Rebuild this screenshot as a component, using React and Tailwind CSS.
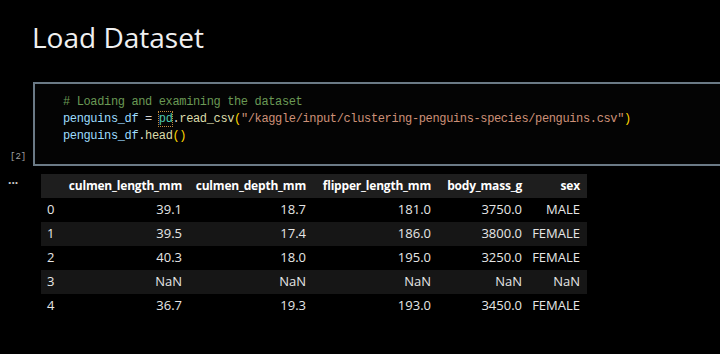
const cols = [
  { name: "culmen_length_mm", w: "w-[127px]" },
  { name: "culmen_depth_mm", w: "w-[124px]" },
  { name: "flipper_length_mm", w: "w-[125px]" },
  { name: "body_mass_g", w: "w-[91px]" },
  { name: "sex", w: "w-[58px]" },
];

const rows = [
  ["39.1", "18.7", "181.0", "3750.0", "MALE"],
  ["39.5", "17.4", "186.0", "3800.0", "FEMALE"],
  ["40.3", "18.0", "195.0", "3250.0", "FEMALE"],
  ["NaN", "NaN", "NaN", "NaN", "NaN"],
  ["36.7", "19.3", "193.0", "3450.0", "FEMALE"],
];

export default function App() {
  return (
    <div className="w-[720px] h-[354px] bg-black overflow-hidden text-[#e6e6e6]" style={{ fontFamily: '"Open Sans", "Noto Sans", sans-serif' }}>
      <h1 className="pl-[32px] pt-[17px] text-[28px] leading-[40px] text-[#f0f0f0]">Load Dataset</h1>

      {/* code cell */}
      <div className="flex mt-[25px]">
        <div className="w-[33px] flex flex-col justify-end pb-[2px]">
          <span className="pl-[10px] text-[9px] text-[#a0a0a0] font-mono">[2]</span>
        </div>
        <div className="flex-1 h-[84px] border-y-2 border-l-2 border-[#6b7a86] bg-[#040404] pl-[28px] pt-[10px]">
          <pre className="text-[12px] leading-[17px] tracking-[-0.36px]" style={{ fontFamily: '"Liberation Mono", monospace' }}>
            <div className="text-[#6a9955]"># Loading and examining the dataset</div>
            <div>
              <span className="text-[#9cdcfe]">penguins_df</span>
              <span className="text-[#d4d4d4]"> = </span>
              <span className="text-[#4ec9b0] outline-1 outline-dotted outline-[#c08a3e]">pd</span>
              <span className="text-[#d4d4d4]">.</span>
              <span className="text-[#dcdcaa]">read_csv</span>
              <span className="text-[#ffd700]">(</span>
              <span className="text-[#ce9178]">"/kaggle/input/clustering-penguins-species/penguins.csv"</span>
              <span className="text-[#ffd700]">)</span>
            </div>
            <div>
              <span className="text-[#9cdcfe]">penguins_df</span>
              <span className="text-[#d4d4d4]">.</span>
              <span className="text-[#dcdcaa]">head</span>
              <span className="text-[#ffd700]">()</span>
            </div>
          </pre>
        </div>
      </div>

      {/* output */}
      <div className="flex mt-[8px]">
        <div className="w-[41px] pl-[8px] text-[12px] leading-[12px] text-[#cccccc] font-bold">...</div>
        <table className="table-fixed w-[546px] text-[13px] border-collapse whitespace-nowrap">
          <thead>
            <tr className="bg-[#1e1e1e] h-[24px] text-white">
              <th className="w-[21px]"></th>
              {cols.map((c) => (
                <th key={c.name} className={`${c.w} pr-[7px] text-right font-bold text-[12px] tracking-[-0.2px]`}>{c.name}</th>
              ))}
            </tr>
          </thead>
          <tbody>
            {rows.map((r, i) => (
              <tr key={i} className={`h-[24px] ${i % 2 === 1 ? "bg-[#161616]" : "bg-black"}`}>
                <td className="pl-[6px] text-left">{i}</td>
                {r.map((v, j) => (
                  <td key={j} className="pr-[7px] text-right">{v}</td>
                ))}
              </tr>
            ))}
          </tbody>
        </table>
      </div>
    </div>
  );
}
